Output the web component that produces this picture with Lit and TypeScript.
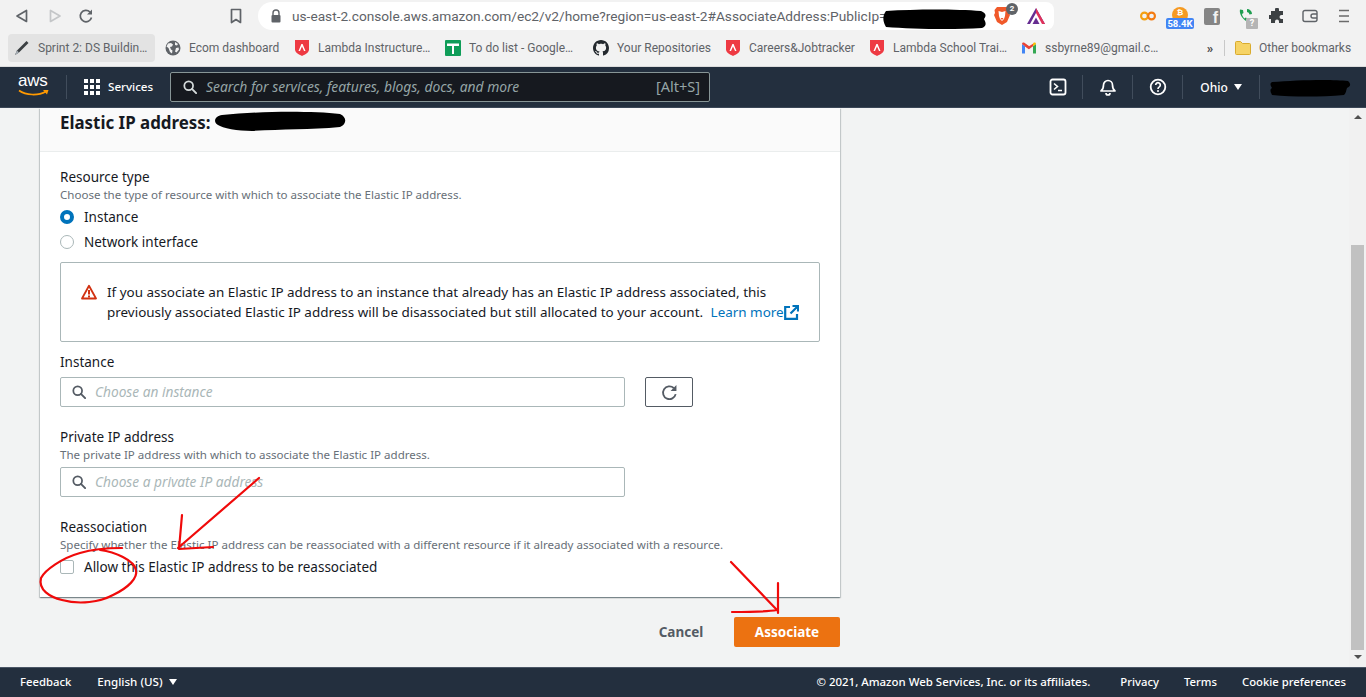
import { LitElement, html, css, svg } from "lit";
import { customElement } from "lit/decorators.js";

const lambdaIcon = html`<svg class="bi" viewBox="0 0 16 16"><path d="M1 0h14v9.500c0 3-3.500 4.800-7 6.500-3.500-1.700-7-3.500-7-6.500z" fill="#ee3a43"/><path d="M4.500 11 7.400 4h1.200l2.900 7h-1.500L8 6.500 6 11z" fill="#fff"/></svg>`;
const globeIcon = html`<svg class="bi" viewBox="0 0 16 16"><circle cx="8" cy="8" r="7.500" fill="#5f6368"/><path d="M3 3.500 6 3l2 1.500-1 2-2 .5 1 2.500 1.500 1-.5 3-2-1.500L3.500 8 1.500 6.500zM10 2l3 2-1 1.500-2-.5zM11 8l2.500-.5.5 2-2.500 3-1.500-1z" fill="#f2f2f2"/></svg>`;
const pencilIcon = html`<svg class="bi" viewBox="0 0 16 16"><path d="M1 15 3 10.500 12.500 1l2 2L5 12.500z" fill="#3c4043"/><path d="M1 15l2-4.500 2 2z" fill="#a9b1b8"/></svg>`;
const sheetsIcon = html`<svg class="bi" viewBox="0 0 16 16"><rect width="16" height="16" rx="1" fill="#0f9d58"/><path d="M2 3.500h12v2.500H9v8H7V6H2z" fill="#fff"/></svg>`;
const githubIcon = html`<svg class="bi" viewBox="0 0 16 16"><path fill="#24292e" d="M8 0C3.580 0 0 3.580 0 8c0 3.540 2.290 6.530 5.470 7.590.4.070.55-.17.55-.38 0-.19-.01-.82-.01-1.490-2.010.37-2.530-.49-2.690-.94-.09-.23-.48-.94-.82-1.130-.28-.15-.68-.52-.01-.53.63-.01 1.080.58 1.230.82.72 1.210 1.870.87 2.330.66.07-.52.28-.87.51-1.070-1.780-.2-3.640-.89-3.640-3.950 0-.87.31-1.590.82-2.150-.08-.2-.36-1.020.08-2.120 0 0 .67-.21 2.200.82.64-.18 1.320-.27 2-.27.68 0 1.360.09 2 .27 1.530-1.040 2.200-.82 2.200-.82.44 1.100.16 1.920.08 2.120.51.56.82 1.270.82 2.150 0 3.070-1.870 3.750-3.650 3.950.29.25.54.73.54 1.480 0 1.070-.01 1.930-.01 2.200 0 .21.15.46.55.38A8.013 8.013 0 0016 8c0-4.420-3.580-8-8-8z"/></svg>`;
const gmailIcon = html`<svg class="bi" viewBox="0 0 16 16"><path d="M1 13.500V4l3 2.300v7.200z" fill="#4285f4"/><path d="M12 13.500V6.300L15 4v9.500z" fill="#34a853"/><path d="M1 4c0-1.500 1.300-2 2.400-1.200L8 6.300l-.1 3L1 4z" fill="#ea4335"/><path d="M4 6.300 8 9.300l4-3V3.800l-4 2.500-4-2.500z" fill="#ea4335"/><path d="M12 3.500l.6-.7C13.700 2 15 2.500 15 4l-3 2.300z" fill="#fbbc04"/></svg>`;

const bookmarks = [
  { w: 147, t: "Sprint 2: DS Buildin…", i: pencilIcon, active: true },
  { w: 129, t: "Ecom dashboard", i: globeIcon },
  { w: 151, t: "Lambda Instructure…", i: lambdaIcon },
  { w: 148, t: "To do list - Google…", i: sheetsIcon },
  { w: 132, t: "Your Repositories", i: githubIcon },
  { w: 144, t: "Careers&Jobtracker", i: lambdaIcon },
  { w: 152, t: "Lambda School Trai…", i: lambdaIcon },
  { w: 190, t: "ssbyrne89@gmail.c…", i: gmailIcon },
];

const searchIcon = (stroke: string) => svg`<circle cx="6.500" cy="6.500" r="5" fill="none" stroke="${stroke}" stroke-width="2"/><path d="M10.200 10.200 15 15" stroke="${stroke}" stroke-width="2.200" stroke-linecap="round"/>`;

@customElement("app-root")
export class AppRoot extends LitElement {
  static styles = css`
    :host { display: flex; flex-direction: column; width: 1366px; height: 697px; overflow: hidden; position: relative; font-family: "Noto Sans", "Open Sans", sans-serif; color: #16191f; background: #f2f3f3; }
    svg { display: block; flex: none; }

    .toolbar { height: 33px; flex: none; background: #f2f2f2; display: flex; align-items: center; position: relative; padding-bottom: 1px; box-sizing: border-box; font-family: Roboto, sans-serif; }
    .tb-nav { display: flex; align-items: center; width: 258px; padding-left: 14px; box-sizing: border-box; }
    .tb-back { width: 16px; height: 16px; }
    .tb-fwd { width: 16px; height: 16px; margin-left: 17px; }
    .tb-reload { width: 16px; height: 16px; margin-left: 15px; }
    .tb-mark { width: 16px; height: 16px; margin-left: 134px; }
    .urlbar { width: 796px; height: 28px; background: #fff; border-radius: 14px 8px 8px 14px; display: flex; align-items: center; box-sizing: border-box; padding-left: 12px; font-size: 13.700px; color: #5f6368; white-space: nowrap; }
    .lock { width: 12px; height: 14px; margin-right: 10px; }
    .url { flex: 1; }
    .brave { position: relative; width: 18px; height: 20px; margin-right: 16px; }
    .brave-badge { position: absolute; left: 13px; top: -3px; width: 12px; height: 12px; border-radius: 50%; background: #5f6368; color: #fff; font-size: 8px; font-weight: 700; line-height: 12px; text-align: center; }
    .bat { width: 18px; height: 17px; margin-right: 9px; }
    .exts { flex: 1; display: flex; align-items: center; padding-left: 86px; }
    .ext-co { width: 16px; height: 10px; }
    .ext-btc { position: relative; width: 28px; height: 22px; margin-left: 10px; }
    .btc-coin { width: 16px; height: 16px; border-radius: 50%; background: #f59a23; color: #fff; font-size: 8px; font-weight: 700; line-height: 11px; text-align: center; position: absolute; left: 6px; top: 2px; }
    .btc-badge { position: absolute; left: 0; top: 13px; width: 28px; height: 11px; background: #4285f4; border-radius: 2px; color: #fff; font-size: 9.500px; font-weight: 700; line-height: 11px; text-align: center; }
    .ext-fb { width: 16px; height: 17px; margin-left: 10px; border-radius: 2px; background: #858585; color: #f2f2f2; font-family: "Liberation Sans", sans-serif; font-size: 16px; font-weight: 700; line-height: 20px; text-align: right; padding-right: 2px; box-sizing: border-box; }
    .ext-ph { position: relative; width: 18px; height: 16px; margin-left: 18px; }
    .ph-badge { position: absolute; left: 8px; top: 10px; width: 12px; height: 11px; border-radius: 1px; background: #b5b5b5; color: #fff; font-size: 9px; font-weight: 700; line-height: 11px; text-align: center; }
    .ext-puzzle { width: 16px; height: 16px; margin-left: 13px; }
    .ext-wallet { width: 16px; height: 14px; margin-left: 17px; }
    .ext-menu { width: 10px; height: 14px; margin-left: 21px; }

    .bookbar { height: 34px; flex: none; background: #f2f2f2; display: flex; align-items: center; padding: 1px 0 4px 8px; box-sizing: border-box; font-family: Roboto, sans-serif; font-size: 12px; color: #5f6368; white-space: nowrap; border-bottom: 1px solid #dcdcdc; }
    .bm { display: flex; align-items: center; gap: 8px; height: 28px; padding-left: 7px; box-sizing: border-box; border-radius: 4px; flex: none; overflow: hidden; }
    .bm.active { background: #e3e3e3; padding-left: 6px; margin-right: 3px; }
    .bi { width: 16px; height: 16px; flex: none; }
    .more { width: 12px; font-size: 13px; font-weight: 700; color: #4a4a4a; text-align: center; }
    .bsep { width: 1px; height: 16px; background: #c8c8c8; margin-left: 8px; }
    .folder { width: 16px; height: 14px; margin-left: 10px; margin-right: 8px; }

    .awsnav { height: 41px; flex: none; background: #232f3e; display: flex; align-items: center; color: #fff; font-size: 12px; box-sizing: border-box; border-bottom: 1px solid #3b4757; }
    .logo { width: 48px; padding-left: 18px; position: relative; height: 30px; }
    .logo-t { font-family: "Liberation Sans", sans-serif; font-size: 17px; line-height: 17px; display: block; letter-spacing: -.3px; }
    .smile { width: 32px; height: 8px; position: absolute; left: 18px; top: 17px; }
    .nsep { width: 1px; height: 24px; background: #414d5c; }
    .grid { width: 16px; height: 16px; margin-left: 17px; }
    .svc { margin-left: 8px; font-size: 11.600px; font-weight: 500; width: 62px; padding-bottom: 2px; }
    .search { width: 540px; height: 30px; border: 1px solid #879596; border-radius: 2px; background: #16191f; display: flex; align-items: center; box-sizing: border-box; padding: 0 9px 0 12px; font-size: 13.850px; color: #95a5a6; }
    .search svg { width: 14px; height: 14px; margin-right: 9px; }
    .search i { flex: 1; padding-bottom: 2px; }
    .search span { font-size: 14.500px; padding-bottom: 2px; }
    .nright { margin-left: auto; display: flex; align-items: center; }
    .ncell { width: 50px; height: 24px; border-right: 1px solid #414d5c; display: flex; align-items: center; justify-content: center; box-sizing: border-box; }
    .ncell svg { width: 18px; height: 18px; }
    .ohio { width: 77px; font-weight: 500; gap: 6px; }
    .caret { width: 0; height: 0; border-left: 4.500px solid transparent; border-right: 4.500px solid transparent; border-top: 6px solid #fff; }
    .acct { width: 106px; height: 24px; }

    .mainrow { flex: 1; display: flex; min-height: 0; }
    .content { flex: 1; padding-left: 40px; }
    .card { width: 800px; background: #fff; box-shadow: 0 1px 1px 0 rgba(0,28,36,.3), 1px 1px 1px 0 rgba(0,28,36,.15), -1px 1px 1px 0 rgba(0,28,36,.15); }
    .chead { height: 44px; background: #fafafa; border-bottom: 1px solid #eaeded; padding: 3px 20px 0; box-sizing: border-box; font-size: 16.900px; font-weight: 700; line-height: 24px; }
    .cbody { padding: 15px 20px 18px; }
    .label { font-size: 13.500px; line-height: 20px; }
    .desc { font-size: 11.550px; line-height: 16px; color: #687078; white-space: nowrap; }
    .opt { display: flex; align-items: center; height: 25px; font-size: 13.500px; }
    .opt.first { margin-top: 1px; }
    .radio { width: 14px; height: 14px; border-radius: 50%; border: 1px solid #aab7b8; box-sizing: border-box; margin-right: 10px; background: #fff; }
    .radio.on { border: 4px solid #0073bb; }
    .check { width: 14px; height: 14px; border-radius: 2px; border: 1px solid #aab7b8; box-sizing: border-box; margin-right: 10px; }
    .alert { height: 80px; margin-top: 8px; border: 1px solid #aab7b8; border-radius: 2px; box-sizing: border-box; display: flex; align-items: center; padding: 0 20px; gap: 10px; font-size: 13.450px; line-height: 20px; white-space: nowrap; }
    .alert > svg { width: 16px; height: 16px; margin-bottom: 20px; }
    .alert a { color: #0073bb; margin-left: 4px; }
    .ext { display: inline-block; width: 15px; height: 15px; vertical-align: -3px; }
    .ext svg { width: 15px; height: 15px; }
    .fieldrow { display: flex; gap: 20px; }
    .input { width: 565px; height: 30px; border: 1px solid #aab7b8; border-radius: 2px; box-sizing: border-box; display: flex; align-items: center; padding: 0 0 1px 11px; font-size: 13.700px; font-style: italic; color: #aab7b8; background: #fff; }
    .input svg { width: 14px; height: 14px; margin-right: 9px; margin-top: 1px; }
    .refresh { width: 48px; height: 30px; border: 1px solid #545b64; border-radius: 2px; box-sizing: border-box; display: flex; align-items: center; justify-content: center; }
    .refresh svg { width: 17px; height: 17px; }
    .mt-label { margin-top: 10px; }
    .mt-input { margin-top: 5px; }
    .mt-group { margin-top: 20px; }
    .mt-input2 { margin-top: 4px; }
    .actions { width: 800px; margin-top: 20px; display: flex; justify-content: flex-end; align-items: center; }
    .cancel { width: 106px; text-align: center; font-size: 13.500px; font-weight: 700; color: #545b64; }
    .primary { width: 106px; height: 30px; border-radius: 2px; background: #ec7211; color: #fff; font-size: 13.500px; font-weight: 700; display: flex; align-items: center; justify-content: center; }
    .scroll { width: 17px; background: #f1f1f1; display: flex; flex-direction: column; align-items: center; }
    .sarrow { height: 0; width: 0; border-left: 4px solid transparent; border-right: 4px solid transparent; }
    .sarrow.up { border-bottom: 4px solid #505050; margin-top: 7px; }
    .sarrow.down { border-top: 4px solid #505050; margin-top: 5px; }
    .thumb { width: 13px; height: 405px; background: #c1c1c1; margin-top: 126px; }

    .footer { height: 30px; flex: none; background: #232f3e; border-top: 1px solid #4b5666; box-sizing: border-box; display: flex; align-items: center; padding: 0 20px 2px; color: #fff; font-size: 11.300px; font-weight: 500; white-space: nowrap; }
    .lang { margin-left: 26px; display: flex; align-items: center; gap: 6px; font-size: 11.600px; }
    .frt { margin-left: auto; display: flex; gap: 25px; }
    .copy { margin-right: 5px; font-size: 11.450px; }

    .overlay { position: absolute; left: 0; top: 0; width: 1366px; height: 697px; pointer-events: none; }
  `;

  render() {
    return html`
      <div class="toolbar">
        <div class="tb-nav">
          <svg class="tb-back" viewBox="0 0 16 16"><path d="M12.500 2.500v11L3 8z" fill="none" stroke="#5f6368" stroke-width="1.700" stroke-linejoin="round"/></svg>
          <svg class="tb-fwd" viewBox="0 0 16 16"><path d="M3.500 2.500v11L13 8z" fill="none" stroke="#c4c6c8" stroke-width="1.700" stroke-linejoin="round"/></svg>
          <svg class="tb-reload" viewBox="0 0 16 16"><path d="M13.500 9.500A5.700 5.700 0 1 1 12 4" fill="none" stroke="#5f6368" stroke-width="1.700"/><path d="M14 1.500v5h-5z" fill="#5f6368"/></svg>
          <svg class="tb-mark" viewBox="0 0 16 16"><path d="M3.500 1.500h9v13L8 11.500l-4.500 3z" fill="none" stroke="#5f6368" stroke-width="1.700" stroke-linejoin="round"/></svg>
        </div>
        <div class="urlbar">
          <svg class="lock" viewBox="0 0 12 14"><path d="M3 6V4a3 3 0 0 1 6 0v2" fill="none" stroke="#5f6368" stroke-width="1.400"/><rect x="1.500" y="6" width="9" height="7.500" rx="1" fill="#5f6368"/></svg>
          <span class="url">us-east-2.console.aws.amazon.com/ec2/v2/home?region=us-east-2#AssociateAddress:PublicIp=</span>
          <div class="brave">
            <svg width="18" height="20" viewBox="0 0 18 20"><path d="M4 1h10l2.500 3-.5 3 1 2-3 7-5 3-5-3-3-7 1-2-.5-3z" fill="#f0592a"/><path d="M5.500 5 9 6l3.500-1L12 10l-1 3-2 2-2-2-1-3z" fill="#fff"/><path d="M7.500 12h3L9 14z" fill="#f0592a"/></svg>
            <span class="brave-badge">2</span>
          </div>
          <svg class="bat" viewBox="0 0 18 17"><path d="M9 0 18 16H0z" fill="#662d91"/><path d="M9 0 18 16h-4.500L9 8z" fill="#e0315a"/><path d="M9 11.500 12 16H6z" fill="#ff5000"/><path d="M9 5 3 16h12z" fill="#fff"/><path d="M9 9.500 12.500 16h-7z" fill="#662d91"/></svg>
        </div>
        <div class="exts">
          <svg class="ext-co" viewBox="0 0 18 10"><circle cx="5" cy="5" r="3.800" fill="none" stroke="#f4a011" stroke-width="2.400"/><circle cx="13" cy="5" r="3.800" fill="none" stroke="#f47b11" stroke-width="2.400"/></svg>
          <div class="ext-btc"><span class="btc-coin">₿</span><span class="btc-badge">58.4K</span></div>
          <div class="ext-fb">f</div>
          <div class="ext-ph">
            <svg width="18" height="16" viewBox="0 0 18 16"><path d="M2 1.500C1 5 4 11 9 13.500l1.500-2.500-2.800-1.500-1.200 1C5 9 4.200 7.500 4 6l1.500-1L5 2z" fill="#1e9e50"/><path d="M9 1a5 5 0 0 1 5 5l-2.500.5A2.800 2.800 0 0 0 9 4z" fill="#1e9e50"/></svg>
            <span class="ph-badge">?</span>
          </div>
          <svg class="ext-puzzle" viewBox="0 0 16 16"><path d="M6 1.500a2 2 0 0 1 4 0V3h4v4h-1.500a2 2 0 0 0 0 4H14v4h-4v-1.500a2 2 0 0 0-4 0V15H2v-4H.5a2 2 0 0 1 0-4H2V3h4z" fill="#3c4043"/></svg>
          <svg class="ext-wallet" viewBox="0 0 16 14"><path d="M13 1.500H3a2 2 0 0 0-2 2v7a2 2 0 0 0 2 2h10a2 2 0 0 0 2-2v-7a2 2 0 0 0-2-2z" fill="none" stroke="#5f6368" stroke-width="1.400"/><path d="M15 5h-4a2 2 0 0 0 0 4h4" fill="none" stroke="#5f6368" stroke-width="1.400"/></svg>
          <svg class="ext-menu" viewBox="0 0 10 14"><path d="M0 1.500h10M0 7h10M0 12.500h10" stroke="#6b6b6b" stroke-width="1.700"/></svg>
        </div>
      </div>

      <div class="bookbar">
        ${bookmarks.map(b => html`<div class="bm ${b.active ? "active" : ""}" style="width:${b.w}px">${b.i}<span>${b.t}</span></div>`)}
        <span class="more">»</span>
        <div class="bsep"></div>
        <svg class="folder" viewBox="0 0 16 14"><path d="M.5 1.500A1 1 0 0 1 1.500.5h4l2 2h7a1 1 0 0 1 1 1v9a1 1 0 0 1-1 1h-13a1 1 0 0 1-1-1z" fill="#f6d365" stroke="#d9ab2e"/></svg>
        <span>Other bookmarks</span>
      </div>

      <div class="awsnav">
        <div class="logo">
          <span class="logo-t">aws</span>
          <svg class="smile" viewBox="0 0 32 8"><path d="M1 1.500C8 6.500 20 7 28 2.500" fill="none" stroke="#ff9900" stroke-width="1.600"/><path d="M25 1 30.500 1 29 5.500z" fill="#ff9900"/></svg>
        </div>
        <div class="nsep"></div>
        <svg class="grid" viewBox="0 0 16 16"><g fill="#fff"><rect width="4" height="4"/><rect x="6" width="4" height="4"/><rect x="12" width="4" height="4"/><rect y="6" width="4" height="4"/><rect x="6" y="6" width="4" height="4"/><rect x="12" y="6" width="4" height="4"/><rect y="12" width="4" height="4"/><rect x="6" y="12" width="4" height="4"/><rect x="12" y="12" width="4" height="4"/></g></svg>
        <span class="svc">Services</span>
        <div class="search">
          <svg viewBox="0 0 16 16">${searchIcon("#d5dbdb")}</svg>
          <i>Search for services, features, blogs, docs, and more</i>
          <span>[Alt+S]</span>
        </div>
        <div class="nright">
          <div class="ncell"><svg viewBox="0 0 18 18"><rect x="1.500" y="1.500" width="15" height="15" rx="2" fill="none" stroke="#fff" stroke-width="1.800"/><path d="M5 5.500 8.500 8.500 5 11.500M9 12.500h4" fill="none" stroke="#fff" stroke-width="1.600"/></svg></div>
          <div class="ncell"><svg viewBox="0 0 18 18"><path d="M2 13c2-1.500 2.500-3 2.500-6a4.500 4.500 0 0 1 9 0c0 3 .5 4.500 2.500 6z" fill="none" stroke="#fff" stroke-width="1.700" stroke-linejoin="round"/><path d="M7 15a2 2 0 0 0 4 0" fill="none" stroke="#fff" stroke-width="1.700"/></svg></div>
          <div class="ncell"><svg viewBox="0 0 18 18"><circle cx="9" cy="9" r="7.300" fill="none" stroke="#fff" stroke-width="1.800"/><path d="M6.700 7a2.300 2.300 0 1 1 3.600 1.900c-.8.500-1.300 1-1.300 2" fill="none" stroke="#fff" stroke-width="1.700"/><circle cx="9" cy="13" r="1" fill="#fff"/></svg></div>
          <div class="ncell ohio"><span>Ohio</span><span class="caret"></span></div>
          <div class="acct"></div>
        </div>
      </div>

      <div class="mainrow">
        <div class="content">
          <div class="card">
            <div class="chead">Elastic IP address:</div>
            <div class="cbody">
              <div class="label">Resource type</div>
              <div class="desc">Choose the type of resource with which to associate the Elastic IP address.</div>
              <div class="opt first"><span class="radio on"></span>Instance</div>
              <div class="opt"><span class="radio"></span>Network interface</div>
              <div class="alert">
                <svg viewBox="0 0 16 15"><path d="M8 1.300 15 14H1z" fill="none" stroke="#d13212" stroke-width="1.800" stroke-linejoin="round"/><path d="M7 5.500h2V10H7zM7 11h2v2H7z" fill="#d13212"/></svg>
                <div>If you associate an Elastic IP address to an instance that already has an Elastic IP address associated, this<br>previously associated Elastic IP address will be disassociated but still allocated to your account. <a>Learn more<span class="ext"><svg viewBox="0 0 15 15"><path d="M6 2H1.200v11.800H13V9" fill="none" stroke="#0073bb" stroke-width="2.200"/><path d="M6.500 8.500 13 2M8.500 1h5.500v5.500" fill="none" stroke="#0073bb" stroke-width="2.200"/></svg></span></a></div>
              </div>
              <div class="label mt-label">Instance</div>
              <div class="fieldrow mt-input">
                <div class="input"><svg viewBox="0 0 16 16">${searchIcon("#545b64")}</svg>Choose an instance</div>
                <div class="refresh"><svg viewBox="0 0 16 16"><path d="M13.800 9.500A6 6 0 1 1 12 3.800" fill="none" stroke="#545b64" stroke-width="1.700"/><path d="M14.500 1v5.500H9z" fill="#545b64"/></svg></div>
              </div>
              <div class="label mt-group">Private IP address</div>
              <div class="desc">The private IP address with which to associate the Elastic IP address.</div>
              <div class="input mt-input2"><svg viewBox="0 0 16 16">${searchIcon("#545b64")}</svg>Choose a private IP address</div>
              <div class="label mt-group">Reassociation</div>
              <div class="desc">Specify whether the Elastic IP address can be reassociated with a different resource if it already associated with a resource.</div>
              <div class="opt first"><span class="check"></span>Allow this Elastic IP address to be reassociated</div>
            </div>
          </div>
          <div class="actions"><span class="cancel">Cancel</span><span class="primary">Associate</span></div>
        </div>
        <div class="scroll">
          <span class="sarrow up"></span>
          <div class="thumb"></div>
          <span class="sarrow down"></span>
        </div>
      </div>

      <div class="footer">
        <span>Feedback</span>
        <span class="lang">English (US) <span class="caret"></span></span>
        <div class="frt">
          <span class="copy">© 2021, Amazon Web Services, Inc. or its affiliates.</span>
          <span>Privacy</span><span>Terms</span><span>Cookie preferences</span>
        </div>
      </div>

      <svg class="overlay" viewBox="0 0 1366 697">
        <g fill="#000">
          <path d="M886 11c30-2 70-2 95 0 6 3 5 5 3 8 2 4 3 7-2 9-30 2-70 1-96-1-3-5-4-11 0-16z"/>
          <path d="M1272 82c24-2 60-3 76-1 3 3 3 5-1 7-1 3-1 5-3 7-24 2-50 2-72 0-2-4-2-6 0-7-2-3-2-5 0-6z"/>
          <path d="M222 115c40-4 90-4 118-1 7 3 7 10 0 13-30 3-60 2-88 4-14 0-30-3-34-6-6-4-2-9 4-10z"/>
        </g>
        <g fill="none" stroke="#f00a0a" stroke-width="2.200" stroke-linecap="round" stroke-linejoin="round">
          <path d="M259 478 178 548M182 515 179 549 213 547"/>
          <path d="M122 548C105 548 90 550 80 553 62 558 45 570 41 578 38 590 50 597 62 600 80 605 100 602 113 595 128 588 138 578 136 570 134 560 115 552 100 550"/>
          <path d="M731 562 777 610M778 583 778 613M732 612C750 612 765 612 777 610"/>
        </g>
      </svg>
    `;
  }
}
